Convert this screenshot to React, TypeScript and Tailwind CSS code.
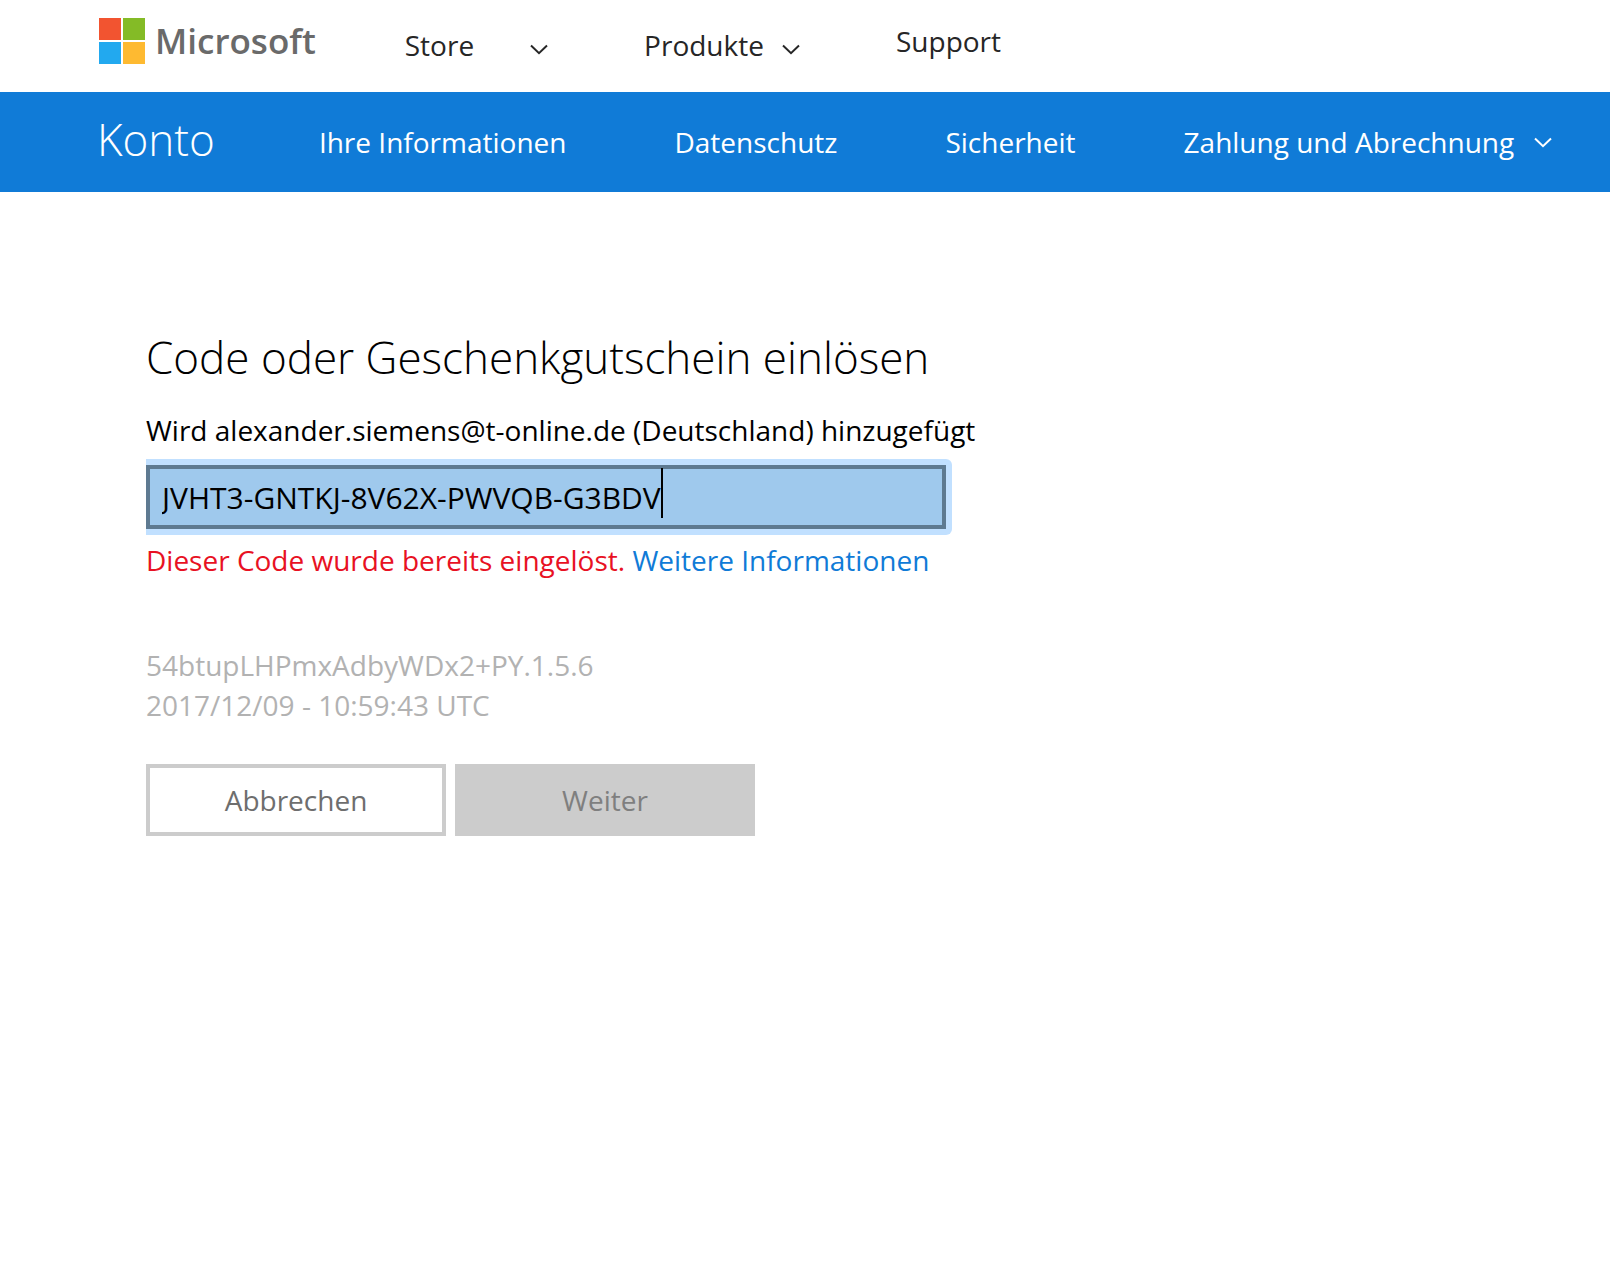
import { useState } from "react";

type NavItem = { label: string; menu?: boolean };

const accountNav: NavItem[] = [
    { label: "Ihre Informationen" },
    { label: "Datenschutz" },
    { label: "Sicherheit" },
    { label: "Zahlung und Abrechnung", menu: true },
];

function Chevron({ className = "" }: { className?: string }) {
    return (
        <svg viewBox="0 0 18 11" className={`h-[11px] w-[18px] shrink-0 ${className}`} fill="none" stroke="currentColor" strokeWidth="2" aria-hidden="true">
            <path d="M1 1.5 9 9.2 17 1.5" />
        </svg>
    );
}

function MicrosoftLogo() {
    return (
        <a href="#" className="flex items-center gap-[10px]">
            <svg viewBox="0 0 46 46" className="size-[46px]" aria-hidden="true">
                <path fill="#f25430" d="M0 0h22v22H0z" />
                <path fill="#84bb26" d="M24 0h22v22H24z" />
                <path fill="#22a9ef" d="M0 24h22v22H0z" />
                <path fill="#feba31" d="M24 24h22v22H24z" />
            </svg>
            <span className="text-[35px] leading-[46px] font-semibold text-[#6a6a6a]">Microsoft</span>
        </a>
    );
}

export default function App() {
    const [code, setCode] = useState("JVHT3-GNTKJ-8V62X-PWVQB-G3BDV");

    return (
        <div className="min-h-screen bg-white font-['Open_Sans',sans-serif] text-[28px] leading-10 text-black">
            {/* Global header */}
            <header className="flex h-[92px] items-start gap-[89px] px-[99px] pt-[18px] whitespace-nowrap text-[#262626]">
                <MicrosoftLogo />
                <nav className="flex items-start gap-24">
                    <button className="flex items-center gap-14 pt-[7px]">
                        Store
                        <Chevron className="mt-2" />
                    </button>
                    <button className="flex items-center gap-[18px] pt-[7px]">
                        Produkte
                        <Chevron className="mt-2" />
                    </button>
                    <a href="#" className="pt-[3px]">Support</a>
                </nav>
            </header>

            {/* Account bar */}
            <div className="flex h-[100px] items-center gap-[104px] bg-[#107bd7] pl-[97px] whitespace-nowrap text-white">
                <a href="#" className="pb-[6px] text-[44px] leading-[60px] font-light">Konto</a>
                <nav className="flex items-center gap-[108px]">
                    {accountNav.map((item) =>
                        item.menu ? (
                            <button key={item.label} className="flex items-center gap-5">
                                {item.label}
                                <Chevron />
                            </button>
                        ) : (
                            <a key={item.label} href="#">{item.label}</a>
                        )
                    )}
                </nav>
            </div>

            <main className="px-[146px] pt-[131px]">
                <h1 className="text-[44px] leading-[68px] font-light">Code oder Geschenkgutschein einlösen</h1>

                <form onSubmit={(e) => e.preventDefault()}>
                    <label htmlFor="code" className="mt-[19px] block">
                        Wird alexander.siemens@t-online.de (Deutschland) hinzugefügt
                    </label>

                    {/* Focused field, the ring is cut off at the left edge */}
                    <div className="mt-[9px] w-fit max-w-full rounded-r-md bg-[#c1e0ff] py-[6px] pr-[6px] text-[30px]">
                        <div className="relative w-[800px] max-w-full">
                            <input
                                id="code"
                                value={code}
                                onChange={(e) => setCode(e.target.value)}
                                className="block h-16 w-full border-4 border-[#5e7a91] bg-[#9fc9ed] px-3 caret-transparent outline-none"
                            />
                            <div className="pointer-events-none absolute top-[3px] left-4 flex" aria-hidden="true">
                                <span className="invisible">{code}</span>
                                <span className="h-[50px] w-[2px] bg-black" />
                            </div>
                        </div>
                    </div>

                    <p className="mt-[5px] text-[#e81123]">
                        Dieser Code wurde bereits eingelöst. <a href="#" className="text-[#107bd7]">Weitere Informationen</a>
                    </p>

                    <div className="mt-[65px] text-[#b2b2b2]">
                        <p>54btupLHPmxAdbyWDx2+PY.1.5.6</p>
                        <p>2017/12/09 - 10:59:43 UTC</p>
                    </div>

                    <div className="mt-[39px] flex gap-[9px]">
                        <button type="button" className="h-[72px] w-[300px] border-4 border-[#ccc] text-[#6e6e6e]">Abbrechen</button>
                        <button type="submit" disabled className="h-[72px] w-[300px] bg-[#ccc] text-[#7f7f7f]">Weiter</button>
                    </div>
                </form>
            </main>
        </div>
    );
}
